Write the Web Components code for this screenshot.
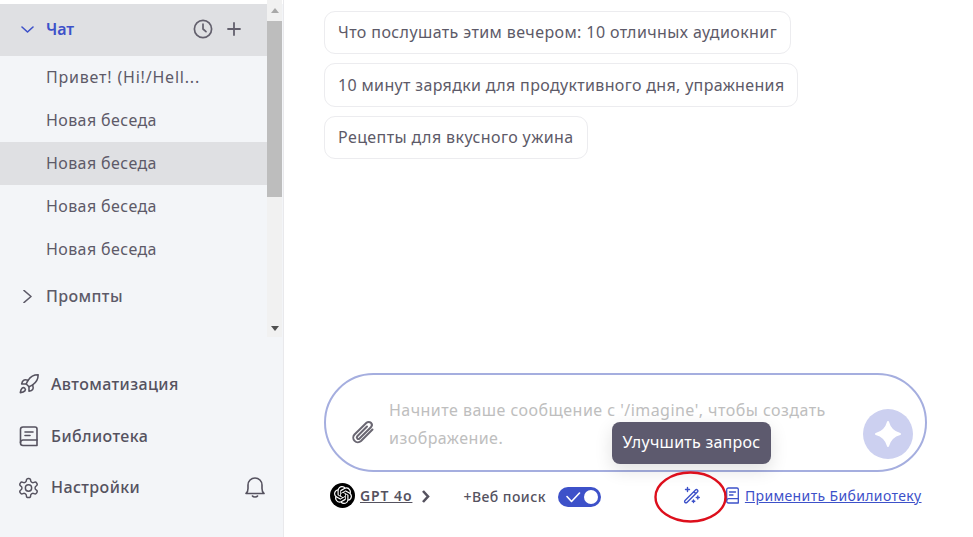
<!DOCTYPE html>
<html lang="ru">
<head>
<meta charset="utf-8">
<title>Чат</title>
<style>
html, body { margin: 0; height: 100%; overflow: hidden; background: #fff; }
body { font-family: "Noto Sans", "Open Sans", sans-serif; color: #55525f; }
</style>
</head>
<body>
<app-shell>
  <side-bar slot="side"></side-bar>
  <chat-pane slot="main"></chat-pane>
</app-shell>

<script>
class AppShell extends HTMLElement {
    constructor() {
        super();
        this.attachShadow({ mode: 'open' });
        this.shadowRoot.innerHTML = `
        <style>
        :host { display: flex; width: 973px; height: 537px; }
        ::slotted([slot="side"]) { flex: 0 0 284px; }
        ::slotted([slot="main"]) { flex: 1; min-width: 0; }
        </style>
        <slot name="side"></slot>
        <slot name="main"></slot>
        `;
    }
}

class NavRow extends HTMLElement {
    constructor() {
        super();
        this.attachShadow({ mode: 'open' });
        this.shadowRoot.innerHTML = `
        <style>
        :host { display: flex; align-items: center; box-sizing: border-box; height: 43px; padding: 0 0 2px 46px; font-size: 16px; letter-spacing: .4px; color: #5d5a68; }
        :host([selected]) { background: #dfe0e3; }
        </style>
        <slot></slot>
        `;
    }
}

class NavGroup extends HTMLElement {
    constructor() {
        super();
        this.attachShadow({ mode: 'open' });
        this.shadowRoot.innerHTML = `
        <style>
        :host { display: flex; align-items: center; box-sizing: border-box; height: 52px; padding: 0 0 2px 21px; font-size: 16px; font-weight: 500; letter-spacing: .4px; color: #5d5a68; }
        :host([open]) { background: #dfe0e3; color: #3d51c9; font-weight: 600; letter-spacing: 0; }
        .chev { width: 13px; height: 13px; margin-right: 12px; flex: none; }
        .label { flex: 1; }
        .tools { display: flex; align-items: center; gap: 13px; margin-right: 25px; color: #63606d; }
        </style>
        <svg class="chev" viewBox="0 0 13 13" fill="none" stroke="currentColor" stroke-width="1.6" stroke-linecap="round" stroke-linejoin="round">
          <path class="p" d=""></path>
        </svg>
        <span class="label"><slot></slot></span>
        <span class="tools"><slot name="tools"></slot></span>
        `;
    }

    connectedCallback() {
        const p = this.shadowRoot.querySelector('.p');
        p.setAttribute('d', this.hasAttribute('open') ? 'M1 4l5.5 5L12 4' : 'M3 .5l7 6-7 6');
    }
}

class SideLink extends HTMLElement {
    constructor() {
        super();
        this.attachShadow({ mode: 'open' });
        this.shadowRoot.innerHTML = `
        <style>
        :host { display: flex; align-items: center; height: 52px; padding: 0 18px 0 18px; font-size: 16px; font-weight: 500; letter-spacing: .4px; color: #55525f; }
        .ic { width: 22px; height: 22px; margin-right: 11px; flex: none; display: flex; }
        .txt { flex: 1; }
        </style>
        <span class="ic"><slot name="icon"></slot></span>
        <span class="txt"><slot></slot></span>
        <slot name="end"></slot>
        `;
    }
}

class SideBar extends HTMLElement {
    constructor() {
        super();
        this.attachShadow({ mode: 'open' });
        this.shadowRoot.innerHTML = `
        <style>
        :host { display: flex; flex-direction: column; height: 537px; box-sizing: border-box; background: #f3f5f8; border-right: 1px solid #e9e9ec; }
        .top { display: flex; height: 337px; background: linear-gradient(#fff 0 4px, transparent 4px); }
        .list { flex: 0 0 267px; padding-top: 4px; min-width: 0; }
        .bar { flex: 0 0 15px; position: relative; background: #f1f1f1; display: flex; flex-direction: column; align-items: center; }
        .arrow { height: 17px; flex: none; display: flex; align-items: center; justify-content: center; }
        .thumb { height: 176px; width: 100%; background: #bdbdbd; }
        .rest { flex: 1; background: #f3f3f4; }
        .links { padding-top: 21px; }
        side-link:last-child { height: 50px; }
        svg { display: block; }
        </style>
        <div class="top">
          <div class="list">
            <nav-group open>Чат
              <svg slot="tools" width="20" height="20" viewBox="0 0 20 20" fill="none" stroke="currentColor" stroke-width="1.7" stroke-linecap="round" stroke-linejoin="round"><circle cx="10" cy="10" r="8.6"/><path d="M10 5.2V10l3 2.6"/></svg>
              <svg slot="tools" width="16" height="16" viewBox="0 0 16 16" fill="none" stroke="currentColor" stroke-width="1.8" stroke-linecap="round"><path d="M8 2v12M2 8h12"/></svg>
            </nav-group>
            <nav-row style="letter-spacing:.8px">Привет! (Hi!/Hell...</nav-row>
            <nav-row>Новая беседа</nav-row>
            <nav-row selected>Новая беседа</nav-row>
            <nav-row>Новая беседа</nav-row>
            <nav-row>Новая беседа</nav-row>
            <nav-group>Промпты</nav-group>
          </div>
          <div class="bar">
            <div class="arrow" style="height:21px"><svg width="8" height="5" viewBox="0 0 8 5"><path d="M4 0l4 5H0z" fill="#a9a9a9"/></svg></div>
            <div class="thumb"></div>
            <div class="rest"></div>
            <div class="arrow"><svg width="8" height="5" viewBox="0 0 8 5"><path d="M0 0h8L4 5z" fill="#505050"/></svg></div>
          </div>
        </div>
        <div class="links">
          <side-link>
            <svg slot="icon" width="22" height="22" viewBox="0 0 24 24" fill="none" stroke="#55525f" stroke-width="1.7" stroke-linejoin="round" stroke-linecap="round">
              <path d="M4.500 16.500c-1.500 1.260-2 5-2 5s3.740-.5 5-2c.71-.84.7-2.130-.09-2.910a2.180 2.180 0 0 0-2.910-.09z"/>
              <path d="M12 15l-3-3a22 22 0 0 1 2-3.950A12.880 12.880 0 0 1 22 2c0 2.720-.78 7.500-6 11a22.350 22.350 0 0 1-4 2z"/>
              <path d="M9 12H4s.55-3.030 2-4c1.620-1.080 5 0 5 0"/>
              <path d="M12 15v5s3.030-.55 4-2c1.080-1.620 0-5 0-5"/>
            </svg>
            Автоматизация
          </side-link>
          <side-link>
            <svg slot="icon" width="22" height="22" viewBox="0 0 22 22" fill="none" stroke="#55525f" stroke-width="1.6" stroke-linejoin="round" stroke-linecap="round">
              <path d="M5 2h12a2 2 0 0 1 2 2v16.500H5a2.500 2.500 0 0 1-2.500-2.500V4.500A2.500 2.500 0 0 1 5 2z"/>
              <path d="M2.500 17.500A2.500 2.500 0 0 1 5 15h14M7 7h8M7 10.500h5"/>
            </svg>
            Библиотека
          </side-link>
          <side-link>
            <svg slot="icon" width="24" height="24" viewBox="0 0 24 24" fill="none" stroke="#55525f" stroke-width="1.500" stroke-linejoin="round" style="margin-left:-1px">
              <circle cx="12" cy="12" r="3.300"/>
              <path d="M12.220 2h-.44a2 2 0 0 0-2 2v.18a2 2 0 0 1-1 1.730l-.43.25a2 2 0 0 1-2 0l-.15-.08a2 2 0 0 0-2.730.73l-.22.38a2 2 0 0 0 .73 2.730l.15.1a2 2 0 0 1 1 1.720v.51a2 2 0 0 1-1 1.740l-.15.09a2 2 0 0 0-.73 2.730l.22.38a2 2 0 0 0 2.730.73l.15-.08a2 2 0 0 1 2 0l.43.25a2 2 0 0 1 1 1.730V20a2 2 0 0 0 2 2h.44a2 2 0 0 0 2-2v-.18a2 2 0 0 1 1-1.730l.43-.25a2 2 0 0 1 2 0l.15.08a2 2 0 0 0 2.730-.73l.22-.39a2 2 0 0 0-.73-2.730l-.15-.08a2 2 0 0 1-1-1.740v-.5a2 2 0 0 1 1-1.740l.15-.09a2 2 0 0 0 .73-2.730l-.22-.38a2 2 0 0 0-2.730-.73l-.15.08a2 2 0 0 1-2 0l-.43-.25a2 2 0 0 1-1-1.730V4a2 2 0 0 0-2-2z"/>
            </svg>
            Настройки
            <svg slot="end" width="22" height="24" viewBox="0 0 22 24" fill="none" stroke="#55525f" stroke-width="1.6" stroke-linejoin="round" stroke-linecap="round" style="margin-right:-1px">
              <path d="M2 18.500c1.500-1 2-2.500 2-5V10a7 7 0 0 1 14 0v3.500c0 2.500.5 4 2 5z"/>
              <path d="M8.500 21c.8 1.300 4.200 1.300 5 0"/>
            </svg>
          </side-link>
        </div>
        `;
    }
}

class PromptChip extends HTMLElement {
    constructor() {
        super();
        this.attachShadow({ mode: 'open' });
        this.shadowRoot.innerHTML = `
        <style>
        :host { display: block; width: fit-content; box-sizing: border-box; height: 43px; line-height: 41px; padding: 0 13px; font-size: 16px; letter-spacing: .4px; white-space: nowrap; color: #5d5a68; background: #fff; border: 1px solid #ececef; border-radius: 11px; }
        :host([tall]) { height: 44px; line-height: 42px; letter-spacing: .34px; }
        </style>
        <slot></slot>
        `;
    }
}

class ChatInput extends HTMLElement {
    constructor() {
        super();
        this.attachShadow({ mode: 'open' });
        this.shadowRoot.innerHTML = `
        <style>
        :host { display: flex; box-sizing: border-box; width: 603px; height: 99px; flex: none; align-items: center; border: 2px solid #a5aedf; border-radius: 50px; padding: 0 12px 0 24px; }
        .clip { flex: none; width: 26px; height: 26px; margin: 20px 13px 0 0; }
        .ph { flex: 1; min-width: 0; font-size: 16px; line-height: 28px; letter-spacing: .46px; color: #bebebe; padding-right: 30px; margin-top: 3px; }
        .send { flex: none; width: 50px; height: 50px; border-radius: 50%; background: #ccd0f0; display: flex; align-items: center; justify-content: center; margin-top: 23px; }
        </style>
        <svg class="clip" viewBox="0 0 26 26" fill="none" stroke="#6a6772" stroke-width="2" stroke-linecap="round" stroke-linejoin="round">
          <path d="M22.500 9.500L11 21a4.600 4.600 0 0 1-6.500-6.500L16.500 2.800a3.100 3.100 0 0 1 4.400 4.400L9.500 18.500a1.500 1.500 0 0 1-2.200-2.200L17 6.500"/>
        </svg>
        <div class="ph"><slot></slot></div>
        <div class="send">
          <svg width="28" height="28" viewBox="0 0 28 28"><path d="M14 2c1.700 6.400 5.600 10.300 12 12-6.400 1.700-10.300 5.600-12 12-1.700-6.400-5.600-10.300-12-12 6.400-1.700 10.300-5.600 12-12z" fill="#fff" stroke="#fff" stroke-width="2" stroke-linejoin="round"/></svg>
        </div>
        `;
    }
}

class ToolBar extends HTMLElement {
    constructor() {
        super();
        this.attachShadow({ mode: 'open' });
        this.shadowRoot.innerHTML = `
        <style>
        :host { display: flex; align-items: center; flex: none; height: 34px; padding-left: 6px; color: #55525f; font-size: 14px; }
        svg { display: block; flex: none; }
        .logo { width: 25px; height: 25px; border-radius: 50%; background: #000; display: flex; align-items: center; justify-content: center; flex: none; }
        .model { font-weight: 600; text-decoration: underline; margin-left: 5px; letter-spacing: .9px; }
        .more { margin-left: 9px; margin-top: 3px; }
        .web { margin-left: 32px; font-weight: 500; letter-spacing: .45px; margin-top: 3px; }
        .toggle { margin-left: 12px; margin-top: 3px; width: 43px; height: 20px; border-radius: 10px; background: #3d51c9; position: relative; flex: none; }
        .toggle i { position: absolute; right: 3px; top: 3px; width: 14px; height: 14px; border-radius: 50%; background: #fff; }
        .toggle svg { position: absolute; left: 7px; top: 5px; }
        .wand { margin-left: 82px; }
        .lib { margin-left: 25px; }
        .apply { margin-left: 6px; color: #3d51c9; text-decoration: underline; letter-spacing: .36px; white-space: nowrap; margin-top: 1px; }
        </style>
        <span class="logo">
          <svg width="18" height="18" viewBox="0 0 24 24" fill="#fff"><path d="M22.2819 9.8211a5.9847 5.9847 0 0 0-.5157-4.9108 6.0462 6.0462 0 0 0-6.5098-2.9A6.0651 6.0651 0 0 0 4.9807 4.1818a5.9847 5.9847 0 0 0-3.9977 2.9 6.0462 6.0462 0 0 0 .7427 7.0966 5.98 5.98 0 0 0 .511 4.9107 6.051 6.051 0 0 0 6.5146 2.9001A5.9847 5.9847 0 0 0 13.2599 24a6.0557 6.0557 0 0 0 5.7718-4.2058 5.9894 5.9894 0 0 0 3.9977-2.9001 6.0557 6.0557 0 0 0-.7475-7.0729zm-9.022 12.6081a4.4755 4.4755 0 0 1-2.8764-1.0408l.1419-.0804 4.7783-2.7582a.7948.7948 0 0 0 .3927-.6813v-6.7369l2.02 1.1686a.071.071 0 0 1 .038.052v5.5826a4.504 4.504 0 0 1-4.4945 4.4944zm-9.6607-4.1254a4.4708 4.4708 0 0 1-.5346-3.0137l.142.0852 4.783 2.7582a.7712.7712 0 0 0 .7806 0l5.8428-3.3685v2.3324a.0804.0804 0 0 1-.0332.0615L9.74 19.9502a4.4992 4.4992 0 0 1-6.1408-1.6464zM2.3408 7.8956a4.485 4.485 0 0 1 2.3655-1.9728V11.6a.7664.7664 0 0 0 .3879.6765l5.8144 3.3543-2.0201 1.1685a.0757.0757 0 0 1-.071 0l-4.8303-2.7865A4.504 4.504 0 0 1 2.3408 7.872zm16.5963 3.8558L13.1038 8.364 15.1192 7.2a.0757.0757 0 0 1 .071 0l4.8303 2.7913a4.4944 4.4944 0 0 1-.6765 8.1042v-5.6772a.79.79 0 0 0-.407-.667zm2.0107-3.0231l-.142-.0852-4.7735-2.7818a.7759.7759 0 0 0-.7854 0L9.409 9.2297V6.8974a.0662.0662 0 0 1 .0284-.0615l4.8303-2.7866a4.4992 4.4992 0 0 1 6.6802 4.66zM8.3065 12.863l-2.02-1.1638a.0804.0804 0 0 1-.038-.0567V6.0742a4.4992 4.4992 0 0 1 7.3757-3.4537l-.142.0805L8.704 5.459a.7948.7948 0 0 0-.3927.6813zm1.0976-2.3654l2.602-1.4998 2.6069 1.4998v2.9994l-2.5974 1.4997-2.6067-1.4997Z"/></svg>
        </span>
        <span class="model">GPT 4o</span>
        <svg class="more" width="10" height="13" viewBox="0 0 10 13" fill="none" stroke="#55525f" stroke-width="2.600" stroke-linejoin="miter"><path d="M2 1l5 5.500L2 12"/></svg>
        <span class="web">+Веб поиск</span>
        <span class="toggle">
          <svg width="17" height="11" viewBox="0 0 17 11" fill="none" stroke="#fff" stroke-width="1.600" stroke-linecap="round" stroke-linejoin="round"><path d="M2 4.500L6.500 9.500 14.500 1"/></svg>
          <i></i>
        </span>
        <svg class="wand" width="18" height="18" viewBox="0 0 18 18" fill="none" stroke="#3d51c9" stroke-width="1.400" stroke-linecap="round" stroke-linejoin="round">
          <path d="M2 14.500L12.500 4a1.300 1.300 0 0 1 1.900 1.900L3.900 16.400a1.300 1.300 0 0 1-1.900-1.900zM10.800 5.700l1.900 1.900"/>
          <path d="M4.500 1.500v4M2.500 3.500h4M14.800 10v3M13.300 11.500h3M10.500 14v2.600M9.200 15.300h2.600"/>
        </svg>
        <svg class="lib" width="13" height="17" viewBox="0 0 13 17" fill="none" stroke="#3d51c9" stroke-width="1.300" stroke-linejoin="round" stroke-linecap="round">
          <path d="M2.500 1h8.500a1.300 1.300 0 0 1 1.300 1.300V16H2.500A1.800 1.800 0 0 1 .7 14.200V2.800A1.800 1.800 0 0 1 2.500 1z"/>
          <path d="M.7 13.500A1.800 1.800 0 0 1 2.500 11.700h9.800M3.500 5h6M3.500 8h3.500"/>
        </svg>
        <span class="apply">Применить Бибилиотеку</span>
        `;
    }
}

class HintBubble extends HTMLElement {
    constructor() {
        super();
        this.attachShadow({ mode: 'open' });
        this.shadowRoot.innerHTML = `
        <style>
        :host { position: absolute; left: 328px; top: 422px; box-sizing: border-box; width: 159px; height: 42px; line-height: 41px; text-align: center; font-size: 16px; letter-spacing: .25px; white-space: nowrap; color: #fff; background: #5d5a6e; border-radius: 8px; box-shadow: 0 6px 18px rgba(0,0,0,.12); }
        </style>
        <slot></slot>
        `;
    }
}

class ChatPane extends HTMLElement {
    constructor() {
        super();
        this.attachShadow({ mode: 'open' });
        this.shadowRoot.innerHTML = `
        <style>
        :host { display: flex; flex-direction: column; position: relative; height: 537px; box-sizing: border-box; padding: 11px 0 25px 40px; background: #fff; }
        .chips { display: flex; flex-direction: column; gap: 9px; flex: 1; }
        chat-input { margin-bottom: 6px; }
        .ring { position: absolute; left: 370px; top: 470px; }
        </style>
        <div class="chips">
          <prompt-chip>Что послушать этим вечером: 10 отличных аудиокниг</prompt-chip>
          <prompt-chip tall>10 минут зарядки для продуктивного дня, упражнения</prompt-chip>
          <prompt-chip>Рецепты для вкусного ужина</prompt-chip>
        </div>
        <chat-input>Начните ваше сообщение с '/imagine', чтобы создать изображение.</chat-input>
        <tool-bar></tool-bar>
        <hint-bubble>Улучшить запрос</hint-bubble>
        <svg class="ring" width="74" height="54" viewBox="0 0 74 54" fill="none"><ellipse cx="36.500" cy="27" rx="35" ry="24.500" stroke="#dd0f1c" stroke-width="2.400"/></svg>
        `;
    }
}

customElements.define('app-shell', AppShell);
customElements.define('nav-row', NavRow);
customElements.define('nav-group', NavGroup);
customElements.define('side-link', SideLink);
customElements.define('side-bar', SideBar);
customElements.define('prompt-chip', PromptChip);
customElements.define('chat-input', ChatInput);
customElements.define('tool-bar', ToolBar);
customElements.define('hint-bubble', HintBubble);
customElements.define('chat-pane', ChatPane);
</script>
</body>
</html>
